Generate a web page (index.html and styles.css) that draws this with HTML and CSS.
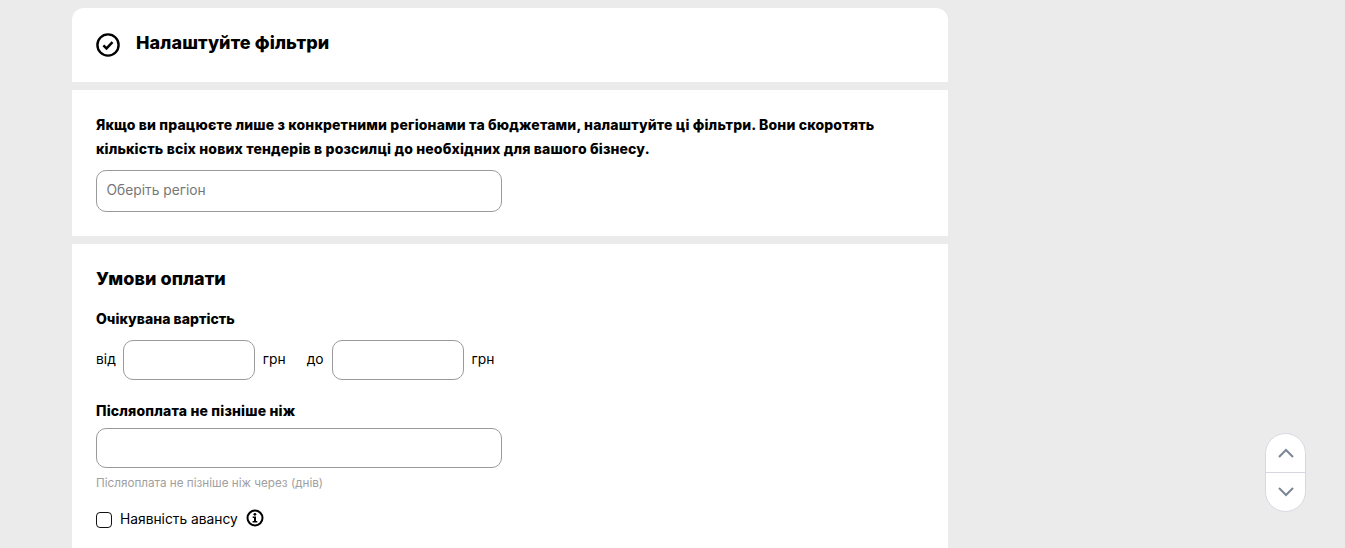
FILE: index.html
```html
<!DOCTYPE html>
<html lang="uk">
<head>
<meta charset="utf-8">
<title>Налаштуйте фільтри</title>
<link rel="stylesheet" href="styles.css">
</head>
<body>
<main class="column">
  <section class="card card-head">
    <svg class="check-icon" width="24" height="24" viewBox="0 0 24 24" fill="none" stroke="#000" stroke-width="2.4"><circle cx="12" cy="12" r="10.6"/><path d="M7.4 12.3l3.1 3.1 6-6.2" stroke-width="2.5"/></svg>
    <h1 class="head-title">Налаштуйте фільтри</h1>
  </section>
  <section class="card card-region">
    <p class="lead">Якщо ви працюєте лише з конкретними регіонами та бюджетами, налаштуйте ці фільтри. Вони скоротять кількість всіх нових тендерів в розсилці до необхідних для вашого бізнесу.</p>
    <input class="field field-region" type="text" placeholder="Оберіть регіон">
  </section>
  <section class="card card-pay">
    <h2 class="pay-title">Умови оплати</h2>
    <h3 class="label">Очікувана вартість</h3>
    <div class="range">
      <span class="from">від</span>
      <input class="field field-small" type="text">
      <span class="unit">грн</span>
      <span>до</span>
      <input class="field field-small" type="text">
      <span>грн</span>
    </div>
    <h3 class="label label-post">Післяоплата не пізніше ніж</h3>
    <input class="field field-post" type="text">
    <p class="hint">Післяоплата не пізніше ніж через (днів)</p>
    <div class="advance">
      <span class="box"></span>
      <span>Наявність авансу</span>
      <svg class="info-icon" width="18" height="18" viewBox="0 0 18 18" fill="none"><circle cx="9" cy="9" r="7.5" stroke="#000" stroke-width="2"/><circle cx="8.9" cy="5.3" r="1.4" fill="#000"/><path d="M6.7 7.6h3.3v4.3h1.3v1.5H6.6v-1.5H8V9.1H6.7z" fill="#000"/></svg>
    </div>
  </section>
</main>
<div class="scroller">
  <button class="scroll-btn" type="button" aria-label="Вгору"><svg width="16" height="10" viewBox="0 0 16 10" fill="none" stroke="#7b8794" stroke-width="2"><path d="M1 9l7-7 7 7"/></svg></button>
  <button class="scroll-btn scroll-down" type="button" aria-label="Вниз"><svg width="16" height="10" viewBox="0 0 16 10" fill="none" stroke="#7b8794" stroke-width="2"><path d="M1 1l7 7 7-7"/></svg></button>
</div>
</body>
</html>
```
FILE: styles.css
```css
* { box-sizing: border-box; }
html, body { margin: 0; height: 548px; overflow: hidden; }
body {
  background: #ebebeb;
  color: #000;
  font-family: Inter, "Noto Sans", sans-serif;
  font-size: 13.8px;
}
.column {
  width: 876px;
  margin-left: 72px;
  padding-top: 8px;
  display: flex;
  flex-direction: column;
  gap: 8px;
}
.card { background: #fff; padding: 0 24px; }
.card-head {
  height: 74px;
  border-radius: 12px 12px 0 0;
  display: flex;
  align-items: flex-start;
  gap: 16px;
}
.check-icon { margin-top: 25px; flex: none; }
.head-title {
  margin: 23px 0 0;
  font-size: 18px;
  line-height: 24px;
  font-weight: 800;
  letter-spacing: 0.1px;
}
.card-region { height: 146px; padding-top: 23px; }
.lead {
  margin: 0;
  font-size: 14px;
  line-height: 24px;
  font-weight: 800;
  letter-spacing: 0.16px;
}
.field {
  display: block;
  background: #fff;
  border: 1px solid #9b9b9b;
  border-radius: 10px;
  font: inherit;
  outline: none;
}
.field::placeholder { color: #777; opacity: 1; }
.field-region { width: 406px; height: 42px; margin-top: 9px; padding: 0 10px 3px 9.5px; }
.card-pay { height: 304px; padding-top: 23px; }
.pay-title {
  margin: 0;
  font-size: 18px;
  line-height: 24px;
  font-weight: 800;
  letter-spacing: 0.05px;
}
.label {
  margin: 16px 0 0;
  font-size: 14px;
  line-height: 24px;
  font-weight: 800;
  letter-spacing: 0.04px;
}
.range {
  display: flex;
  align-items: center;
  gap: 8px;
  margin-top: 9px;
}
.range span { padding-bottom: 2px; }
.from { margin-right: -1px; }
.field-small { width: 132px; height: 40px; }
.unit { margin-right: 13px; }
.label-post { margin-top: 19px; letter-spacing: 0.18px; }
.field-post { width: 406px; height: 40px; margin-top: 5px; }
.hint {
  margin: 7px 0 0;
  font-size: 11.7px;
  line-height: 16px;
  color: #a0a0a0;
}
.advance {
  display: flex;
  align-items: center;
  margin-top: 18px;
  height: 20px;
}
.box {
  width: 16px;
  height: 16px;
  border: 1.5px solid #111;
  border-radius: 4px;
  margin-right: 8px;
  margin-top: 2px;
}
.info-icon { margin-left: 8px; margin-top: -3px; }
.scroller {
  position: fixed;
  left: 1265px;
  top: 433px;
  width: 41px;
  height: 79px;
  display: flex;
  flex-direction: column;
  border: 1px solid #d5d8e0;
  border-radius: 21px;
  background: #fff;
  overflow: hidden;
}
.scroll-btn {
  flex: 1;
  border: 0;
  padding: 0;
  background: transparent;
  display: flex;
  align-items: center;
  justify-content: center;
}
.scroll-down { border-top: 1px solid #d5d8e0; }
```
